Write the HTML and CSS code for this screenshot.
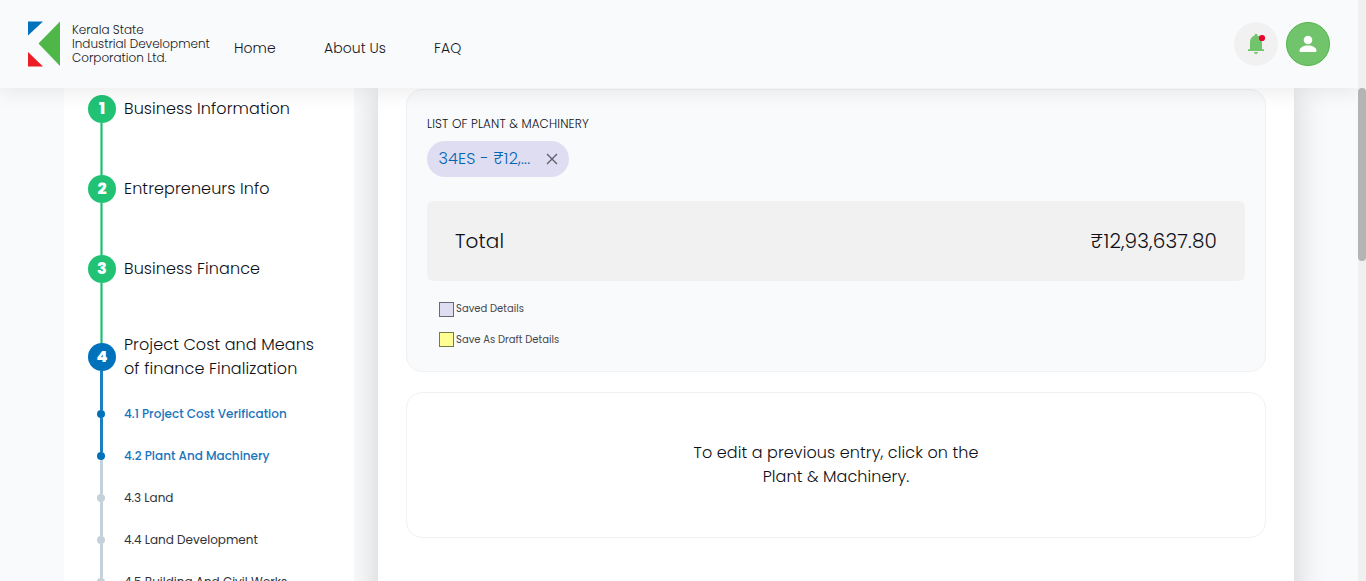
FILE: index.html
```html
<!DOCTYPE html>
<html lang="en">
<head>
<meta charset="utf-8">
<title>Plant And Machinery</title>
<link rel="stylesheet" href="styles.css">
</head>
<body>
<div class="app">
  <header class="header">
    <div class="brand">
      <svg class="logo" width="32" height="46" viewBox="0 0 32 46"><path fill="#0072bc" d="M0 .5h15L0 14.500z"/><path fill="#4fb748" d="M32 .5v44.500L10.500 22.500z"/><path fill="#ec1c24" d="M0 31l15 14.500H0z"/></svg>
      <p class="brand-name">Kerala State<br>Industrial Development<br>Corporation Ltd.</p>
    </div>
    <nav class="nav"><a class="nav-home">Home</a><a class="nav-about">About Us</a><a>FAQ</a></nav>
    <div class="actions">
      <div class="bell"><svg width="44" height="44" viewBox="0 0 44 44"><path fill="#71c46c" d="M14 29v-1.700h2V20c0-3.200 1.700-5.500 4.500-6.300V13.300a1.500 1.500 0 0 1 3 0v.4C26.300 14.500 28 16.800 28 20v7.300h2V29zM20 30h4c0 1.100-.9 1.900-2 1.900s-2-.8-2-1.900z"/><circle cx="28" cy="16" r="3.100" fill="#e4042c"/></svg></div>
      <div class="avatar"><svg width="42" height="42" viewBox="0 0 42 42"><circle cx="21" cy="17" r="4.300" fill="#fff"/><path fill="#fff" d="M13.700 29q-1.200 0-1.200-1.300c0-3.200 4-5.200 8.500-5.200s8.500 2 8.500 5.200q0 1.300-1.200 1.300z"/></svg></div>
    </div>
  </header>
  <main class="content">
    <aside class="sidebar">
      <div class="step"><div class="rail"><b class="num">1</b><i class="line done"></i></div><p class="step-name">Business Information</p></div>
      <div class="step"><div class="rail"><b class="num">2</b><i class="line done"></i></div><p class="step-name">Entrepreneurs Info</p></div>
      <div class="step tall"><div class="rail"><b class="num">3</b><i class="line done"></i></div><p class="step-name">Business Finance</p></div>
      <div class="step current"><div class="rail"><b class="num">4</b><i class="line active"></i></div><p class="step-name">Project Cost and Means<br>of finance Finalization</p></div>
      <div class="sub on"><div class="rail"><i class="line active"></i><i class="dot blue"></i><i class="line active"></i></div><span>4.1 Project Cost Verification</span></div>
      <div class="sub on"><div class="rail"><i class="line active"></i><i class="dot blue"></i><i class="line"></i></div><span>4.2 Plant And Machinery</span></div>
      <div class="sub"><div class="rail"><i class="line"></i><i class="dot"></i><i class="line"></i></div><span>4.3 Land</span></div>
      <div class="sub"><div class="rail"><i class="line"></i><i class="dot"></i><i class="line"></i></div><span>4.4 Land Development</span></div>
      <div class="sub"><div class="rail"><i class="line"></i><i class="dot"></i><i class="line"></i></div><span>4.5 Building And Civil Works</span></div>
    </aside>
    <section class="panel">
      <div class="card list">
        <h2 class="label">LIST OF PLANT &amp; MACHINERY</h2>
        <div class="chip"><span class="chip-text">34ES - ₹12,...</span><svg width="12" height="12" viewBox="0 0 12 12"><path d="M1 1l10 10M11 1L1 11" stroke="#5a5d66" stroke-width="1.300"/></svg></div>
        <div class="total"><span>Total</span><span>₹12,93,637.80</span></div>
        <div class="legend"><i class="swatch saved"></i><span>Saved Details</span></div>
        <div class="legend second"><i class="swatch draft"></i><span>Save As Draft Details</span></div>
      </div>
      <div class="card hint"><p>To edit a previous entry, click on the<br>Plant &amp; Machinery.</p></div>
    </section>
  </main>
</div>
<div class="scrollbar"><div class="thumb"></div></div>
</body>
</html>
```
FILE: styles.css
```css
* { box-sizing: border-box; }
body { margin: 0; width: 1366px; height: 581px; display: flex; overflow: hidden; background: #f9fafc; color: #0e1016; font-family: Poppins, Inter, "Open Sans", sans-serif; font-weight: 300; font-size: 16px; line-height: 24px; letter-spacing: .09px; }
p, h2 { margin: 0; font-weight: inherit; }
svg { display: block; flex: none; }
.app { width: 1358px; height: 581px; display: flex; flex-direction: column; overflow: hidden; }
.header { flex: none; height: 88px; display: flex; padding-left: 28px; padding-right: 28px; background: #f9fafc; box-shadow: 0 4px 20px rgba(0,0,0,.08); position: relative; z-index: 3; letter-spacing: 0; }
.brand { display: flex; gap: 12px; width: 206px; padding-top: 21px; }
.brand-name { padding-top: 2px; font-size: 12px; line-height: 14px; color: #17181b; white-space: nowrap; }
.nav { display: flex; padding-top: 36px; font-size: 14px; color: #17181b; letter-spacing: .05px; }
.nav-home { width: 90px; }
.nav-about { width: 110px; }
.actions { display: flex; gap: 8px; margin-left: auto; padding-top: 22px; }
.bell, .avatar { width: 44px; height: 44px; border-radius: 50%; }
.bell { background: #f1f1f1; }
.avatar { background: #71c46c; border: 1px solid #4fb748; }
.content { flex: 1; min-height: 0; display: flex; gap: 24px; padding-left: 64px; }
.sidebar { flex: none; width: 290px; height: 600px; padding: 7px 0 0 24px; background: #fff; position: relative; z-index: 2; }
.step { display: flex; gap: 8px; height: 80px; }
.step.tall { height: 88px; }
.step.current { height: 50px; }
.rail { width: 28px; flex: none; display: flex; flex-direction: column; }
.num { width: 28px; height: 28px; flex: none; border-radius: 50%; background: #21c274; color: #fff; text-align: center; font-size: 16px; font-weight: 800; line-height: 28px; letter-spacing: 0; }
.current .num { background: #0072bc; }
.line { flex: 1; width: 3px; margin-left: 12px; background: #c4d0da; }
.line.done { background: linear-gradient(90deg, #7adaab 1px, #21b96f 1px, #21b96f 2px, #7adaab 2px); }
.line.active { background: #1a80c2; }
.step-name { padding-top: 2px; white-space: nowrap; }
.current .step-name { margin-top: -12px; }
.sub { display: flex; gap: 8px; height: 42px; font-size: 12px; line-height: 42px; font-weight: 400; color: #303238; letter-spacing: 0; }
.sub.on { color: #1a74bc; font-weight: 500; }
.dot { flex: none; width: 8px; height: 8px; margin-left: 9.400px; border-radius: 50%; background: #c4d0da; }
.dot.blue { background: #0072bc; }
.panel { flex: none; width: 916px; height: 540px; padding: 1px 28px; background: #fff; box-shadow: 0 0 32px rgba(0,0,0,.18); }
.card { border: 1px solid #f0f1f2; border-radius: 16px; }
.list { height: 283px; padding: 22px 20px; background: #f9fafc; }
.label { font-size: 12px; line-height: 24px; letter-spacing: .14px; }
.chip { display: flex; align-items: center; width: 142px; height: 36px; margin-top: 5px; padding: 0 11px 0 11.500px; justify-content: space-between; border-radius: 18px; background: #dfddf1; color: #0066b3; letter-spacing: .19px; }
.total { display: flex; justify-content: space-between; align-items: center; height: 80px; margin-top: 24px; padding: 0 28px; border-radius: 6px; background: #f1f1f1; font-size: 20px; letter-spacing: .15px; }
.legend { display: flex; gap: 2px; margin: 21px 0 0 12px; font-size: 10px; line-height: 14px; font-weight: 400; letter-spacing: .02px; color: #45474d; }
.legend.second { margin-top: 15px; line-height: 15px; }
.swatch { width: 15px; height: 15px; border: 1px solid #696875; }
.saved { background: #dfddf1; }
.draft { background: #fefe93; border-color: #77774a; }
.hint { height: 146px; margin-top: 20px; padding-top: 48px; text-align: center; }
.scrollbar { width: 8px; height: 581px; padding-top: 88px; background: #f0f0f0; }
.thumb { height: 173px; border-radius: 4px; background: #b4b4b4; }
```
